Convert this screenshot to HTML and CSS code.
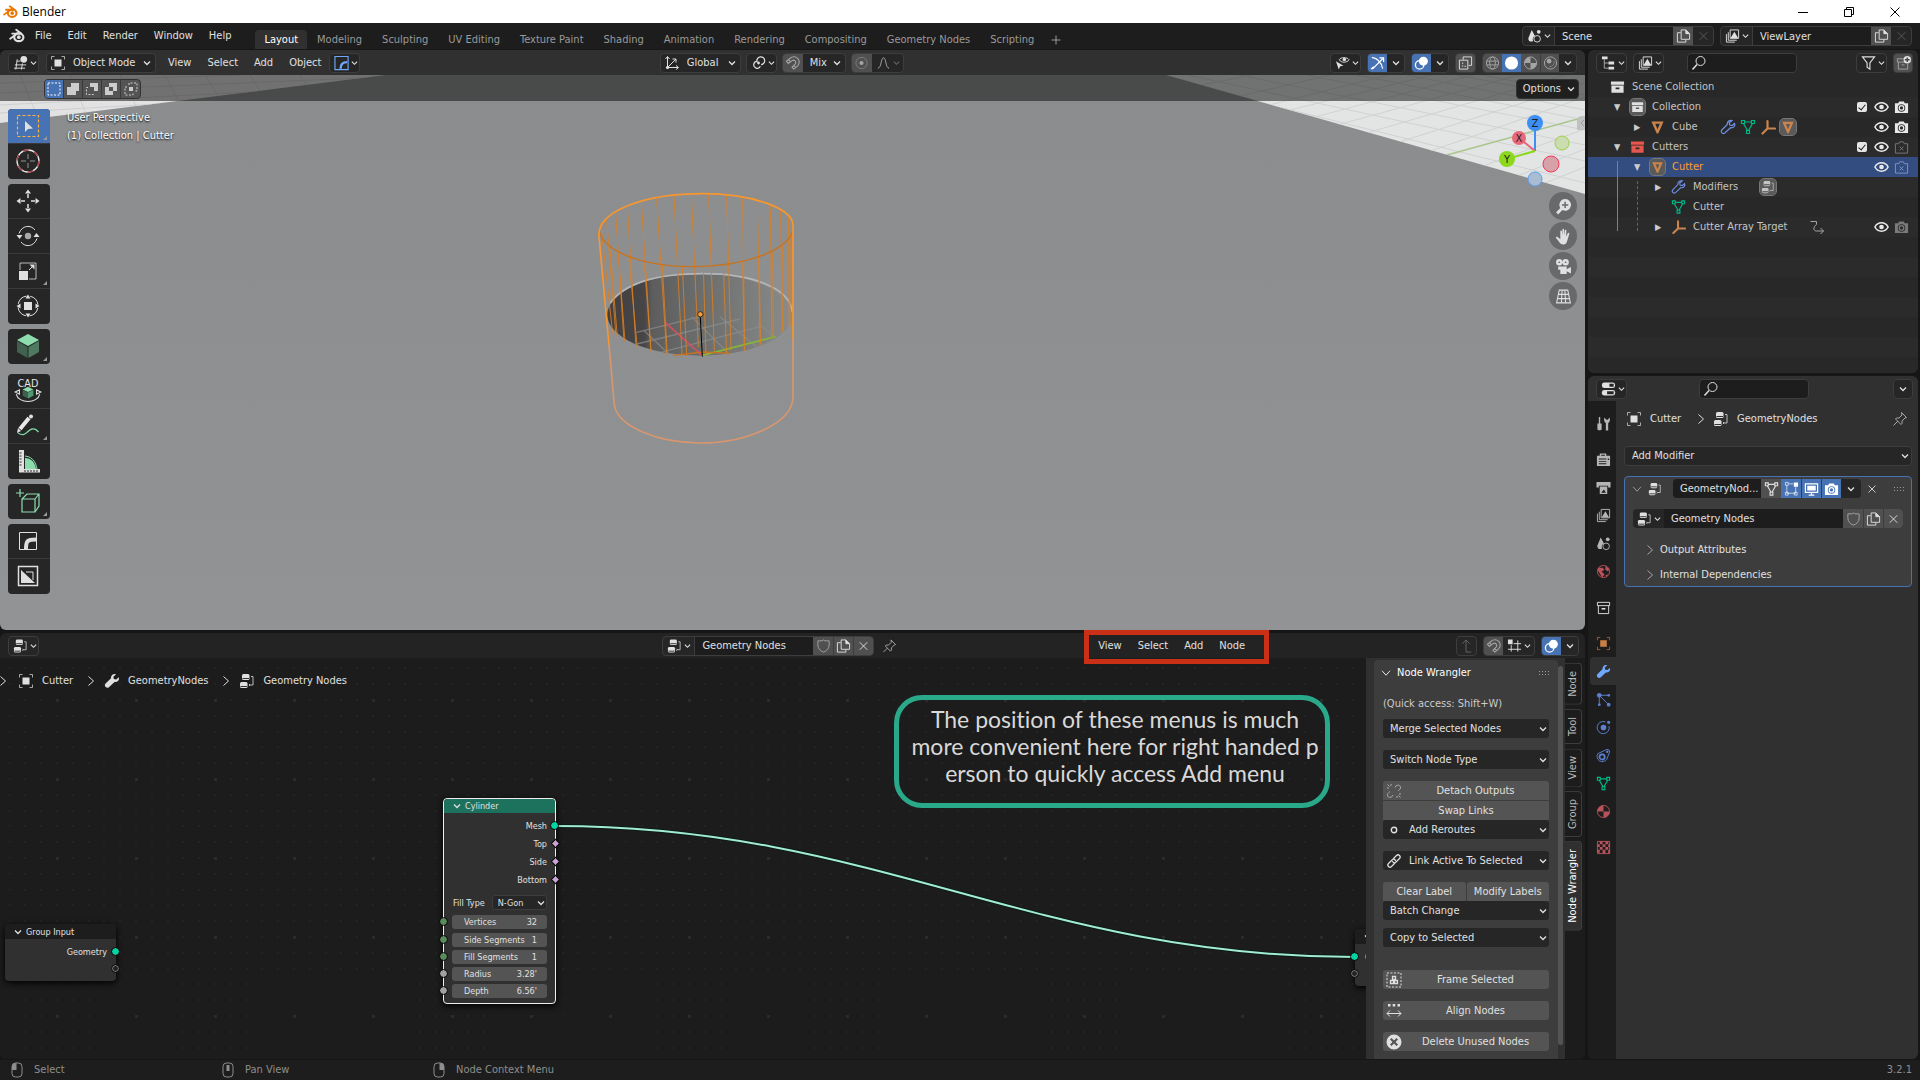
FILE: index.html
```html
<!DOCTYPE html>
<html lang="en">
<head>
<meta charset="utf-8">
<title>Blender</title>
<link rel="stylesheet" href="styles.css">
</head>
<body>
<svg class="defs" aria-hidden="true">
  <symbol id="chev" viewBox="0 0 8 8"><path class="s" d="M1 2.500l3 3 3-3" stroke-width="1.300"/></symbol>
  <symbol id="right" viewBox="0 0 16 16"><path class="s" d="M5.500 3.500l5 4.500-5 4.500"/></symbol>
  <symbol id="open" viewBox="0 0 16 16"><path class="s" d="M3.500 5.500l4.500 5 4.500-5"/></symbol>
  <symbol id="close" viewBox="0 0 16 16"><path class="s" d="M4 4l8 8M12 4l-8 8"/></symbol>
  <symbol id="plus" viewBox="0 0 16 16"><path class="s" d="M8 3.500v9M3.500 8h9"/></symbol>
  <symbol id="logo" viewBox="0 0 16 16"><path class="s" d="M1.200 10.800L8.600 5.200M3.200 5.600h7M7.200 1.800l5 3.700" stroke-width="1.900" stroke-linecap="round"/><ellipse class="s" cx="9.800" cy="9.300" rx="4.600" ry="3.900" stroke-width="2.200"/><circle class="eye" cx="9.800" cy="9.200" r="1.900"/></symbol>
  <symbol id="view3d" viewBox="0 0 16 16"><path class="s" d="M4 6h4M2 10h12M4.500 4L3 15M10 8.500L9 15M1 13.500h12" /><circle class="f" cx="11.500" cy="4" r="3.600"/></symbol>
  <symbol id="object" viewBox="0 0 16 16"><path class="f" d="M4.500 4.500h7v7h-7z"/><path class="s" d="M1.500 4.500v-3h3M11.500 1.500h3v3M14.500 11.500v3h-3M4.500 14.500h-3v-3" opacity=".7"/></symbol>
  <symbol id="bevelblue" viewBox="0 0 16 16"><path d="M1 1h14v14H1z" fill="none" stroke="#71a8ff" stroke-width="1.200"/><path d="M7 14c0-5 2-7 7-7" fill="none" stroke="#71a8ff" stroke-width="2.500"/></symbol>
  <symbol id="axes" viewBox="0 0 16 16"><path class="s" d="M3.500 2v10.500H14M4 12l8-8M1.500 4l2-2.500 2 2.500M12 10.500l2.500 2-2.500 2M8.500 4H12v3.500"/><circle class="f" cx="3.500" cy="12.500" r="1.600"/></symbol>
  <symbol id="pivot" viewBox="0 0 16 16"><path class="s" d="M7 6.200a3.700 3.700 0 1 0 3 5.200M6.300 6.500a4.200 4.200 0 1 1 4.500 3.300" stroke-width="1.300"/><circle class="f" cx="8" cy="8" r="1.500"/></symbol>
  <symbol id="magnet" viewBox="0 0 16 16"><path class="s" d="M1.500 6L5.500 3a5.600 5.600 0 0 1 8 8L9.500 14.500 7.500 12.500 11 9a2.500 2.500 0 0 0-3.500-3.500L3.500 8.500zM3.800 4.300l2 2.500M9.300 10.700l2.200 2.200" stroke-width="1.200"/></symbol>
  <symbol id="prop" viewBox="0 0 16 16"><circle class="s" cx="8" cy="8" r="6" opacity=".5"/><circle class="f" cx="8" cy="8" r="2.200"/></symbol>
  <symbol id="curve" viewBox="0 0 16 16"><path class="s" d="M2 13.500c4 0 3-11 6-11s2 11 6 11"/></symbol>
  <symbol id="visible" viewBox="0 0 16 16"><path class="f" d="M1 6l3 9 1.500-3.500L9 11z"/><path class="s" d="M4.500 4.500C6 1.500 13 1.500 15 4.500c-2 3.500-8.500 3.500-10.500 0z"/><circle class="f" cx="10" cy="4.300" r="1.900"/></symbol>
  <symbol id="gizmo" viewBox="0 0 16 16"><path class="s" d="M2 2c6 1 10 5 11.500 12M2.500 14.500l11-11M10 2.500h4.500V7M1 14.500l3-2.500" stroke-width="1.300"/></symbol>
  <symbol id="overlay" viewBox="0 0 16 16"><circle class="f" cx="10" cy="6" r="4.800"/><circle class="s" cx="6" cy="10" r="4.500" stroke-width="1.400"/></symbol>
  <symbol id="xray" viewBox="0 0 16 16"><path class="s" d="M5.500 4.500v-3h9v9h-3M1.500 5h9v9.500h-9z"/><path class="s" d="M5 7.500v4h4" stroke-dasharray="1.500 1.500"/></symbol>
  <symbol id="wire" viewBox="0 0 16 16"><circle class="s" cx="8" cy="8" r="6.500"/><ellipse class="s" cx="8" cy="8" rx="3" ry="6.500"/><path class="s" d="M2 6h12M2 10h12"/></symbol>
  <symbol id="solid" viewBox="0 0 16 16"><circle class="f" cx="8" cy="8" r="7"/></symbol>
  <symbol id="mat" viewBox="0 0 16 16"><circle class="s" cx="8" cy="8" r="6.500"/><path class="f" d="M8 1.500v6.500H1.500A6.500 6.500 0 0 1 8 1.500zM8 8h6.500A6.500 6.500 0 0 1 8 14.500z"/></symbol>
  <symbol id="rendered" viewBox="0 0 16 16"><circle class="s" cx="8" cy="8" r="6.500"/><circle class="f" cx="6.500" cy="6" r="2.500"/><path class="s" d="M12 6c.5 3-2 6-5.500 6" opacity=".6"/></symbol>
  <symbol id="scene" viewBox="0 0 16 16"><path class="f" d="M5 1.500l3.500 6.500a4 4 0 0 0-2 5.500C3 15 1 12.500 1.500 10z"/><circle class="f" cx="12.500" cy="3.500" r="2"/><circle class="s" cx="10.800" cy="11" r="3.500"/></symbol>
  <symbol id="copy" viewBox="0 0 16 16"><path class="s" d="M5.500 1.500h5l4 4v6h-9zM10.500 1.500v4h4M5 4.500H1.500v10h9V12" /><path class="f" d="M10.500 1.500l4 4h-4z"/></symbol>
  <symbol id="layers" viewBox="0 0 16 16"><path class="s" d="M5.500 1.500h9v9h-9zM3.500 4v8.500h9M1.500 6v8.500h9"/><path class="f" d="M6 10l4-6.500 4 6.500z"/></symbol>
  <symbol id="tree" viewBox="0 0 16 16"><path class="f" d="M1 1h6v3H1zM8 6.500h6v3H8zM8 12h6v3H8z"/><path class="s" d="M3.500 4v9.500H8M3.500 8H8" opacity=".7"/></symbol>
  <symbol id="search" viewBox="0 0 16 16"><circle class="s" cx="9.500" cy="6" r="4.500"/><path class="s" d="M6 9.500L1.500 14.500" stroke-width="1.500"/></symbol>
  <symbol id="filter" viewBox="0 0 16 16"><path class="s" d="M1.500 1.500h13L9.500 8v6.500l-3-2V8z" stroke-width="1.200"/></symbol>
  <symbol id="newcol" viewBox="0 0 16 16"><path class="s" d="M8 3.500H1.500v3.500h10M2.500 7v7.500h10V9M6 10h3"/><circle cx="12" cy="4.500" r="4" fill="#e0e0e0"/><path d="M12 2v5M9.500 4.500h5" stroke="#444" stroke-width="1.400"/></symbol>
  <symbol id="coll" viewBox="0 0 16 16"><path class="f" d="M1 2h14v3.500H1z"/><path class="f" fill-rule="evenodd" d="M1.500 6.500h13V14h-13zM6 8.500v2h4v-2z"/></symbol>
  <symbol id="collo" viewBox="0 0 16 16"><path class="s" d="M1.500 2.500h13V6h-13zM2.500 6v8.500h11V6"/><path class="f" d="M6 8.500h4v1.700H6z"/></symbol>
  <symbol id="tri" viewBox="0 0 16 16"><path class="f" fill-rule="evenodd" d="M1.500 2h13L8.800 15H7.200zM5.500 4.500L8 10.500l2.500-6z"/></symbol>
  <symbol id="mesh" viewBox="0 0 16 16"><path class="s" d="M4.500 3h7M3.500 4.500l4 7M12.500 4.500l-4 7M1.500 1.500h3v3h-3zM11.500 1.500h3v3h-3zM6.500 11.500h3v3h-3z" stroke-width="1.200"/></symbol>
  <symbol id="wrench" viewBox="0 0 16 16"><path class="f" d="M14.800 4.200l-2.600 2.300-2.400-.5-.4-2.300L12 1.200C9.500.300 6.800 2 7 5.200L1.400 10.800c-1.800 2.200 1.400 5.200 3.500 3.500L10.500 9c3.500.500 5.300-2.500 4.300-4.800z"/></symbol>
  <symbol id="wrencho" viewBox="0 0 16 16"><path class="s" d="M14.500 4.500l-2.500 2-2.300-.500-.500-2.300L12 1.500C9 .800 7 3 7.300 5.500l-5.500 5.500c-1.500 2 1 4.500 3 3L10.500 8.700c3 .5 5-2 4-4.200z" stroke-width="1.200"/></symbol>
  <symbol id="empty" viewBox="0 0 16 16"><path class="s" d="M7.500 2v7.500H15M7.500 9.500l-5 5" stroke-width="2.200" stroke-linecap="round"/></symbol>
  <symbol id="nodes" viewBox="0 0 16 16"><rect class="f" x="3" y="1" width="7.500" height="6" rx="1.500"/><rect class="f" x="1" y="9" width="7.500" height="6" rx="1.500"/><path d="M3.500 5.500h6.500M1.500 13.500h6.500" stroke="#333" stroke-width="1"/><path class="s" d="M12 3.500h2v8.500h-3.500M10 11l1 1-1 1" opacity=".8"/></symbol>
  <symbol id="eye" viewBox="0 0 16 16"><path class="s" d="M1 8c3-6 11-6 14 0-3 6-11 6-14 0z" stroke-width="1.700"/><circle class="f" cx="8" cy="8" r="2.500"/></symbol>
  <symbol id="cam" viewBox="0 0 16 16"><path class="f" fill-rule="evenodd" d="M1 4h3.500L5.500 2h5l1 2H15v10.500H1zM8 5a4 4 0 1 0 0 8 4 4 0 0 0 0-8z"/><circle class="s" cx="8" cy="9" r="2.400" stroke-width="1.400"/></symbol>
  <symbol id="camoff" viewBox="0 0 16 16"><path class="s" d="M1.500 4.500h3.500L6 2.500h4l1 2h3.500v10h-13zM6 7.500l4 4M10 7.500l-4 4"/></symbol>
  <symbol id="hook" viewBox="0 0 16 16"><path class="s" d="M1.500 2.500h6v3c-4 3-3 6.500 0 6.500h7M11.500 9l3 3-3 3"/></symbol>
  <symbol id="props" viewBox="0 0 16 16"><rect class="f" x="1" y="1" width="14" height="6" rx="2.500"/><rect class="f" x="1" y="9" width="14" height="6" rx="2.500"/><path d="M9 2.500h4.500v3H9zM6.500 10.500h7v3h-7z" fill="#262626"/></symbol>
  <symbol id="tool" viewBox="0 0 16 16"><path class="f" d="M3 1h1.500v7H6v6c0 1.500-4.500 1.500-4.500 0V8H3zM9 1.500l2 2.500h1.500l2-2.500c1 3 0 5-1.500 6v8h-2.500v-8C9 6.500 8 4.500 9 1.500z"/></symbol>
  <symbol id="render" viewBox="0 0 16 16"><path class="f" fill-rule="evenodd" d="M1 4h3V1.500h7V4h4v11H1zM5.500 3v1h4V3zM3 7v1h8V7zM3 9.500v1h8v-1zM3 12v1h8v-1zM12.500 7v1.500H14V7z"/></symbol>
  <symbol id="output" viewBox="0 0 16 16"><path class="f" d="M.500 2h15v6H13V6H3v2H.500z"/><path class="f" fill-rule="evenodd" d="M4 7h8v8H4zM5.500 13.500h5L8.500 10z"/></symbol>
  <symbol id="world" viewBox="0 0 16 16"><circle class="s" cx="8" cy="8" r="6.500"/><path class="f" d="M2 4l5 0 2 2-3 2 3 3-2 3.500L5 12 2 7zM10 2l4 3-1 3-3-2zM10 12l3-1-2 3z"/></symbol>
  <symbol id="particles" viewBox="0 0 16 16"><circle class="f" cx="3.500" cy="3.500" r="2.500"/><path class="s" d="M3.500 3.500h9M3.500 3.500v9M3.500 3.500l9 9"/><circle class="f" cx="13.500" cy="3.500" r="1.500"/><circle class="f" cx="3.500" cy="13.500" r="1.500"/><circle class="f" cx="13.500" cy="13.500" r="2"/></symbol>
  <symbol id="physics" viewBox="0 0 16 16"><path class="s" d="M10 2A6.500 6.500 0 1 0 14 6.500"/><circle class="f" cx="8" cy="8" r="3"/><circle class="f" cx="13.500" cy="2.500" r="1.700"/></symbol>
  <symbol id="constraint" viewBox="0 0 16 16"><path class="s" d="M2 6L11.500 1.500a2.500 2.500 0 0 1 3 3L11.500 12A5.500 5.500 0 1 1 2 6z"/><circle class="s" cx="6.500" cy="9.500" r="2.800" stroke-width="1.800"/><circle class="f" cx="12" cy="4" r="1.300"/></symbol>
  <symbol id="checker" viewBox="0 0 16 16"><path class="s" d="M1.500 1.500h13v13h-13z"/><path class="f" d="M4 1.500h3v3H4zM10 1.500h3v3h-3zM1.500 4.500H4v3H1.500zM7 4.500h3v3H7zM13 4.500h2v3h-2zM4 7.500h3v3H4zM10 7.500h3v3h-3zM1.500 10.500H4v3H1.500zM7 10.500h3v4H7zM13 10.500h2v4h-2z"/></symbol>
  <symbol id="pin" viewBox="0 0 16 16"><path class="s" d="M9.500 1.500l5 5-1.500.500-3 3v2.500l-1 1-5.500-5.500 1-1H7l3-3zM6 10l-4.500 4.500"/></symbol>
  <symbol id="editmode" viewBox="0 0 16 16"><path class="s" d="M3 4v8.500h9.500V6M5 2.500h5M1.500 1h3v3h-3zM1.500 11.500h3v3h-3zM11 11.500h3v3h-3z" opacity=".7"/><path class="f" d="M10.500 1H15v4.500h-4.500z"/></symbol>
  <symbol id="screen" viewBox="0 0 16 16"><path class="s" d="M1.500 2.500h13v9h-13zM8 12v2.500M5 14.500h6" stroke-width="1.300"/><path class="f" d="M3.500 4.500h9v5h-9z"/></symbol>
  <symbol id="shield" viewBox="0 0 16 16"><path class="s" d="M8 1.500l1.500 1h4.500V7c0 4-3 6.500-6 7.500-3-1-6-3.500-6-7.500V2.500h4.500z"/></symbol>
  <symbol id="grip" viewBox="0 0 12 6"><path d="M0 1.500h12M0 4.500h12" stroke="#999" stroke-dasharray="1 2"/></symbol>
  <symbol id="up" viewBox="0 0 16 16"><path class="s" d="M13 14.500H7.500v-13M3.500 5.500l4-4 4 4"/></symbol>
  <symbol id="snapgrid" viewBox="0 0 16 16"><path class="f" d="M1 1h5v5H1z"/><path class="s" d="M11.500 2v12M4.500 7v7M7 5.500h8M1 11.500h14"/></symbol>
  <symbol id="unlink" viewBox="0 0 16 16"><path class="s" d="M9 4.500c1-3.500 6-3 5.500.500-.3 1.500-1.500 2-2.500 3M7 12c-1 3.500-6 3-5.500-.500.300-1.500 1.500-2 2.500-3M1.500 1.500l2 2M5 1v2M1 5h2M14.500 14.500l-2-2M11 15v-2M15 11h-2"/></symbol>
  <symbol id="dotc" viewBox="0 0 16 16"><circle class="s" cx="8" cy="8" r="2.700" stroke-width="1.400"/></symbol>
  <symbol id="link" viewBox="0 0 16 16"><path class="s" d="M7 6l3.500-3.500c2-2 5 1 3 3L10 9c-1.500 1.500-3.500.500-3.500-1M9 10l-3.500 3.500c-2 2-5-1-3-3L6 7c1.500-1.500 3.500-.500 3.500 1" stroke-width="1.200"/></symbol>
  <symbol id="frame" viewBox="0 0 16 16"><path class="s" d="M1 1h14v14H1z" stroke-dasharray="2 1.500"/><path class="s" d="M6.500 4.500h3v3h-3zM4.500 8.500h3v3h-3zM8.500 8.500h3v3h-3z" stroke-width="1.300"/></symbol>
  <symbol id="align" viewBox="0 0 16 16"><path class="f" d="M2 1h2.500v2.500H2zM6.700 1h2.500v2.500H6.700zM11.500 1H14v2.500h-2.500z"/><path class="s" d="M1 10.500h14M4 7.500l-3 3 3 3M12 7.500l3 3-3 3"/></symbol>
  <symbol id="cancel" viewBox="0 0 16 16"><path class="f" fill-rule="evenodd" d="M8 .5a7.500 7.500 0 1 0 0 15 7.500 7.500 0 0 0 0-15zM5.500 4L8 6.500 10.500 4 12 5.500 9.500 8l2.500 2.500-1.500 1.500L8 9.500 5.500 12 4 10.500 6.500 8 4 5.500z"/></symbol>
  <symbol id="mouse" viewBox="0 0 16 16"><rect class="s" x="3" y="1" width="10" height="14" rx="3.500"/></symbol>
  <symbol id="zoomin" viewBox="0 0 16 16"><path class="f" fill-rule="evenodd" d="M9.500 1a5.500 5.500 0 1 1-2.600 10.300L3 15.500 1 13.500l4-4A5.500 5.500 0 0 1 9.500 1zM8.800 3.500v2.300H6.500v1.400h2.300v2.300h1.400V7.200h2.300V5.800h-2.300V3.500z"/></symbol>
</svg>

<header class="titlebar">
  <svg class="i orange"><use href="#logo"/></svg><span>Blender</span>
  <div class="winbtns">
    <button aria-label="Minimize"><svg viewBox="0 0 12 12"><path class="s" d="M1 6.500h10"/></svg></button>
    <button aria-label="Restore"><svg viewBox="0 0 12 12"><path class="s" d="M1.500 3.500h7v7h-7zM3.500 3.500v-2h7v7h-2"/></svg></button>
    <button aria-label="Close"><svg viewBox="0 0 12 12"><path class="s" d="M1.500 1.500l9 9M10.500 1.500l-9 9"/></svg></button>
  </div>
</header>

<div class="topbar">
  <nav class="menus">
    <button aria-label="Blender menu"><svg class="i"><use href="#logo"/></svg></button>
    <button>File</button><button>Edit</button><button>Render</button><button>Window</button><button>Help</button>
  </nav>
  <nav class="tabs">
    <button class="on">Layout</button><button>Modeling</button><button>Sculpting</button><button>UV Editing</button><button>Texture Paint</button><button>Shading</button><button>Animation</button><button>Rendering</button><button>Compositing</button><button>Geometry Nodes</button><button>Scripting</button><button aria-label="Add workspace"><svg class="i"><use href="#plus"/></svg></button>
  </nav>
  <div class="idblocks">
    <div class="group idblock"><button class="icb"><svg class="i"><use href="#scene"/></svg><svg class="c"><use href="#chev"/></svg></button><input aria-label="Scene" value="Scene"><button class="sq lit"><svg class="i"><use href="#copy"/></svg></button><button class="sq dim"><svg class="i"><use href="#close"/></svg></button></div>
    <div class="group idblock"><button class="icb"><svg class="i"><use href="#layers"/></svg><svg class="c"><use href="#chev"/></svg></button><input aria-label="View layer" value="ViewLayer"><button class="sq lit"><svg class="i"><use href="#copy"/></svg></button><button class="sq dim"><svg class="i"><use href="#close"/></svg></button></div>
  </div>
</div>

<main class="workspace">
  <div class="left">
    <section class="viewport">
      <div class="ehead">
        <button class="icb group"><svg class="i"><use href="#view3d"/></svg><svg class="c"><use href="#chev"/></svg></button>
        <div class="group dd mode"><svg class="i"><use href="#object"/></svg><select aria-label="Mode"><option>Object Mode</option></select><svg class="c"><use href="#chev"/></svg></div>
        <nav class="menus"><button>View</button><button>Select</button><button>Add</button><button>Object</button></nav>
        <button class="icb group"><svg class="i"><use href="#bevelblue"/></svg><svg class="c"><use href="#chev"/></svg></button>
        <span class="space-a"></span>
        <div class="group dd orient"><svg class="i"><use href="#axes"/></svg><select aria-label="Orientation"><option>Global</option></select><svg class="c"><use href="#chev"/></svg></div>
        <button class="icb group"><svg class="i"><use href="#pivot"/></svg><svg class="c"><use href="#chev"/></svg></button>
        <div class="group dd snap"><button class="sq lit soft"><svg class="i"><use href="#magnet"/></svg></button><select aria-label="Snap"><option>Mix</option></select><svg class="c"><use href="#chev"/></svg></div>
        <div class="group soft"><button class="sq lit"><svg class="i"><use href="#prop"/></svg></button><button class="icb"><svg class="i"><use href="#curve"/></svg><svg class="c faint"><use href="#chev"/></svg></button></div>
        <span class="space-b"></span>
        <div class="shading">
          <button class="icb group"><svg class="i"><use href="#visible"/></svg><svg class="c"><use href="#chev"/></svg></button>
          <div class="group"><button class="sq blue"><svg class="i"><use href="#gizmo"/></svg></button><button class="sq more"><svg class="c"><use href="#chev"/></svg></button></div>
          <div class="group"><button class="sq blue"><svg class="i"><use href="#overlay"/></svg></button><button class="sq more"><svg class="c"><use href="#chev"/></svg></button></div>
          <div class="group"><button class="sq lit"><svg class="i"><use href="#xray"/></svg></button></div>
          <div class="group"><button class="sq lit soft"><svg class="i"><use href="#wire"/></svg></button><button class="sq blue"><svg class="i"><use href="#solid"/></svg></button><button class="sq lit soft"><svg class="i"><use href="#mat"/></svg></button><button class="sq lit soft"><svg class="i"><use href="#rendered"/></svg></button><button class="sq more"><svg class="c"><use href="#chev"/></svg></button></div>
        </div>
      </div>
      <div class="scene">
        <svg class="canvas" viewBox="0 0 1585 555" preserveAspectRatio="xMidYMid slice">
          <defs>
            <clipPath id="floorL"><path d="M0 0h386L0 48z"/></clipPath>
            <clipPath id="floorR"><path d="M1166 0h419v119z"/></clipPath>
            <linearGradient id="bg" x1="0" y1="0" x2="0" y2="1"><stop offset="0" stop-color="#8b8c8d"/><stop offset="1" stop-color="#919395"/></linearGradient>
            <linearGradient id="hole"><stop offset="0" stop-color="#413f40"/><stop offset=".2" stop-color="#474546"/><stop offset=".24" stop-color="#5d5d5d"/><stop offset=".6" stop-color="#717373"/><stop offset="1" stop-color="#8a8c8c"/></linearGradient>
            <clipPath id="holeClip"><ellipse cx="420" cy="434" rx="278" ry="123"/></clipPath>
          </defs>
          <path d="M0 0h1585v555H0z" fill="url(#bg)"/>
          <g clip-path="url(#floorL)"><path d="M0 0h386v48H0z" fill="#e2e2e3"/><path d="M20 0l20 48M70 0l20 48M120 0l25 48M165 0l25 48M205 0l30 48M250 0l30 48M300 0l30 48M0 38l386-22M0 30l386-20M0 18l386-16M0 8l240-8" stroke="#cfcfd2" fill="none"/></g>
          <g clip-path="url(#floorR)"><path d="M1166 0h419v119h-419z" fill="#e3e4e4"/><path d="M1160 18l360-70M1160 40l425-100M1230 40l355-90M1270 40l315-78M1300 46l285-76M1330 52l255-70M1360 60l225-66M1390 70l195-62M1425 78l160-56M1480 92l105-38M1510 104l75-30M1540 110l45-18M1140 -20l445 90M1180 -25l405 80M1230 -25l355 70M1280 -25l305 60M1330 -25l255 50M1380 -20l205 40M1160 -6l425 92M1150 0l435 108" stroke="#d0d2d2" fill="none"/><path d="M1447 80l138-38" stroke="#a9c58a" stroke-width="1.500"/></g>
          <path d="M1577 55v-9q0-5 5-5h3v14z" fill="#c0c1c1"/><path d="M1584 45l-3 3 3 3" fill="none" stroke="#999"/>
          <g transform="translate(560 95) scale(.3333)" fill="none">
            <ellipse cx="420" cy="434" rx="278" ry="123" fill="url(#hole)"/>
            <path d="M150 400C200 330 310 311 430 311c140 0 260 40 267 115" stroke="#b4b6b7" stroke-width="5"/>
            <g clip-path="url(#holeClip)" stroke="#8c8e8e" stroke-width="4" opacity=".7"><path d="M230 487l190-47M230 522l310-75M300 548l300-78M250 480l80 75M395 440l110 110M480 440l110 90M595 460l50 42"/></g>
            <path d="M316 458l108 97" stroke="#d4505f" stroke-width="5"/><path d="M424 557l222-57" stroke="#84b637" stroke-width="5"/>
            <g stroke="#dd7f22" stroke-width="3"><path opacity=".85" d="M122 160l36 330M140 150l28 350M167 128l25 388M202 110l26 420M244 96l29 447M290 86l30 464M342 77l24 475M394 72l21 460M446 72l17 470M500 77l13 465M548 82l6 455M592 95l9 430M631 108l5 395M662 122l5 360M685 140l3 330M150 235l22 265M175 250l20 265M207 265l25 270M253 278l20 267M307 286l15 270M367 290l13 268M430 290l8 268M490 285l10 268M548 272l5 271M598 260l3 265M638 242l2 263M668 225l1 263M690 200v270"/><path stroke-width="4" stroke="#c9731f" d="M117 180C130 250 260 290 400 290c150 0 280-45 300-110M340 556l90-10 80 4"/></g>
            <path d="M147 525l16 180c10 65 130 114 257 114 140 0 280-60 279-139V505" stroke="#d8966f" stroke-width="5"/>
            <path d="M147 525L117 200C110 120 260 71 430 71c150 0 265 45 269 92v344" stroke="#f8962f" stroke-width="5"/>
            <path d="M421 440l6 120" stroke="#000" stroke-width="3"/><circle cx="421" cy="433" r="8" fill="#ff9a2e" stroke="#30302a" stroke-width="3"/>
          </g>
          <g fill="none" stroke-width="2"><path d="M1535 76V48" stroke="#3b8ff5"/><path d="M1535 76l-16-13" stroke="#e9647a"/><path d="M1535 76l-28 8" stroke="#8bd81c"/>
            <g stroke-width="1"><circle cx="1562" cy="68" r="7" fill="#cbdcae" stroke="#9ccf4b"/><circle cx="1551" cy="89" r="8" fill="#d6a1a8" stroke="#f5395b"/><circle cx="1535" cy="104" r="7" fill="#a9bcd2" stroke="#5a9df0"/></g></g>
          <circle cx="1535" cy="48" r="8" fill="#3b8ff5"/><circle cx="1519" cy="63" r="7" fill="#e7677b"/><circle cx="1507" cy="84" r="8" fill="#8bd81c"/>
          <g class="axis" text-anchor="middle"><text x="1535" y="52">Z</text><text x="1519" y="67">X</text><text x="1507" y="88">Y</text></g>
        </svg>
        <div class="toolhead">
          <div class="group modes">
            <button class="blue"><svg viewBox="0 0 14 14"><path class="s" d="M1 1h12v12H1z" stroke-dasharray="2 1.500"/></svg></button>
            <button><svg viewBox="0 0 14 14"><path class="f" d="M5 1h8v8h-3v4H1V5h4z"/></svg></button>
            <button><svg viewBox="0 0 14 14"><path class="f" d="M5 1h8v8H9V5H5z"/><path class="s" d="M3 5.500H1.500v7h7V11" stroke-dasharray="2 1.500"/></svg></button>
            <button><svg viewBox="0 0 14 14"><path class="f" fill-rule="evenodd" d="M5 1h8v8H9v4H1V5h4zM5 5v4h4V5z"/></svg></button>
            <button><svg viewBox="0 0 14 14"><path class="f" d="M5 5h4v4H5z"/><path class="s" d="M5 3V1h8v8h-2M3 5H1v8h8v-2" stroke-dasharray="2 1.500"/></svg></button>
          </div>
          <button class="options">Options<svg class="c"><use href="#chev"/></svg></button>
        </div>
        <div class="stage">
          <div class="toolbar">
            <div class="tg">
              <button class="sel corner"><svg viewBox="0 0 24 24"><path d="M1.500 1.500h21v21h-21z" fill="none" stroke="#ffb13b" stroke-width="1.200" stroke-dasharray="3 2"/><path class="f" d="M9 7v11l3-3 5-.5z"/></svg></button>
              <button><svg viewBox="0 0 24 24"><circle cx="12" cy="12" r="11" fill="none" stroke="#e8e8e8" stroke-width="1.300"/><circle cx="12" cy="12" r="11" fill="none" stroke="#a83c40" stroke-width="1.400" stroke-dasharray="5.800 5.800"/><path class="s" d="M12 5v5M12 14v5M5 12h5M14 12h5" opacity=".6"/></svg></button>
            </div>
            <div class="tg">
              <button><svg viewBox="0 0 24 24"><path class="f" d="M12 .5l3 4H9zM12 23.500l3-4H9zM.5 12l4-3v6zM23.500 12l-4-3v6z"/><path class="s" d="M12 5v4M12 15v4M5 12h4M15 12h4" stroke-width="1.500"/></svg></button>
              <button><svg viewBox="0 0 24 24"><path class="s" d="M3 9.500C6 1 15 .500 19 6M21 14.500C18 23 9 23.500 5 18"/><path class="f" d="M.500 11h6L3.500 15zM17.500 13h6l-3-4z"/><circle class="f" cx="12" cy="12" r="3.200" opacity=".7"/></svg></button>
              <button class="corner"><svg viewBox="0 0 24 24"><path class="s" d="M4 11V4h16v16h-7" opacity=".8"/><path class="f" d="M3 12h9v9H3zM18.500 5.500v5l-5-5z"/><path class="s" d="M13 11l4-4"/></svg></button>
              <button><svg viewBox="0 0 24 24"><circle class="s" cx="12" cy="12" r="10" stroke-dasharray="12 3.700" stroke-dashoffset="-2"/><path class="f" d="M8 8h8v8H8zM12 .5l2.500 4h-5zM12 23.500l2.500-4h-5zM.500 12l4-2.500v5zM23.500 12l-4-2.500v5z"/></svg></button>
            </div>
            <div class="tg"><button class="corner"><svg viewBox="0 0 24 24"><path d="M12 0l11 6-11 6L1 6z" fill="#8ddcae"/><path d="M1 7l10.500 6v11L1 18z" fill="#3f614e"/><path d="M23 7l-10.500 6v11L23 18z" fill="#4f7a62"/></svg></button></div>
            <div class="tg gap">
              <button><svg class="cad" viewBox="0 0 26 28"><text x="13" y="10" text-anchor="middle">CAD</text><path class="s" d="M2 17c2 9 20 9 22 0M1 15l4-2v4zM25 15l-4-2v4z"/><path d="M13 10l5 2.500-5 2.500-5-2.500z" fill="#8ddcae"/><path d="M8 13l5 2.500V21l-5-2.500z" fill="#3f614e"/><path d="M18 13l-5 2.500V21l5-2.500z" fill="#4f9a70"/></svg></button>
              <button class="corner"><svg viewBox="0 0 24 24"><path d="M2 19c8 5 9-3 14-4 3-.5 5 1 6.500 3" fill="none" stroke="#7fd6a4" stroke-width="1.300"/><path d="M4 15L13 4" stroke="#e8e8e8" stroke-width="4"/><path class="f" d="M1 19l1-5 3 3z"/><circle class="f" cx="15" cy="2.500" r="2"/></svg></button>
              <button><svg viewBox="0 0 24 24"><path d="M9 9c7 0 10 5 11 11H9z" fill="#8ddcae"/><path d="M9 7c9 1 11 8 12 13" fill="none" stroke="#8ddcae"/><path class="f" d="M3 1h5v19h16v3.500H3z"/><path d="M3.500 4h2M3.500 7h2M3.500 10h2M3.500 13h2M3.500 16h2M9 23v-2M12 23v-2M15 23v-2M18 23v-2M21 23v-2" stroke="#262626"/></svg></button>
            </div>
            <div class="tg"><button class="corner"><svg viewBox="0 0 24 24"><path d="M6 10h13v13H6zM6 10l5-5h12v12l-4 6M19 10l4-5M4 0v8M0 4h8" fill="none" stroke="#8ddcae" stroke-width="1.200"/></svg></button></div>
            <div class="tg">
              <button><svg viewBox="0 0 24 24"><path class="s" d="M3.500 3.500h17v17h-17z"/><path d="M10 20c0-8 1-9.500 10-9.500" fill="none" stroke="#ddd" stroke-width="4"/></svg></button>
              <button><svg viewBox="0 0 24 24"><path class="s" d="M2.500 2.500h19v19h-19z" stroke-width="1.500"/><path class="f" d="M5 6l14 13H5z"/><path class="s" d="M10 8h7v8"/></svg></button>
            </div>
          </div>
          <p class="vinfo">User Perspective<br>(1) Collection | Cutter</p>
          <div class="navbtns">
            <button aria-label="Zoom"><svg class="i"><use href="#zoomin"/></svg></button>
            <button aria-label="Move view"><svg viewBox="0 0 16 16"><path class="f" d="M5 9V3c0-1 1.500-1 1.500 0l.5 4V1.500c0-1 1.500-1 1.500 0V7l.7-4.800c.2-1 1.600-.7 1.500.2L10.500 8l1.500-3c.6-1 1.800-.4 1.500.5L11.500 12c-.5 2-1.500 3.500-3.500 3.500-2.500 0-3.500-1.500-4.500-3L1 9.500c-.6-.9.5-1.800 1.400-1l2.600 2z"/></svg></button>
            <button aria-label="Camera view"><svg viewBox="0 0 16 16"><path class="f" fill-rule="evenodd" d="M4 1a3 3 0 1 0 0 6 3 3 0 0 0 0-6zM4 3.200a.8.800 0 1 1 0 1.600.8.800 0 0 1 0-1.600zM10 1a3 3 0 1 0 0 6 3 3 0 0 0 0-6zM10 3.200a.8.800 0 1 1 0 1.600.8.800 0 0 1 0-1.600z"/><path class="f" d="M3 8h8v2.500l4-2v6l-4-2V15H5v-4H3z"/></svg></button>
            <button aria-label="Perspective"><svg viewBox="0 0 16 16"><path class="s" d="M4 2h8l2.500 12h-13zM3.200 6h9.600M2.500 10h11M6.700 2L6 14M9.300 2l.7 12"/></svg></button>
          </div>
        </div>
      </div>
    </section>

    <section class="nodeeditor">
      <div class="ehead">
        <button class="icb group"><svg class="i"><use href="#nodes"/></svg><svg class="c"><use href="#chev"/></svg></button>
        <span class="space-c"></span>
        <div class="group idblock"><button class="icb"><svg class="i"><use href="#nodes"/></svg><svg class="c"><use href="#chev"/></svg></button><input aria-label="Node tree" value="Geometry Nodes"><button class="sq lit soft"><svg class="i"><use href="#shield"/></svg></button><button class="sq lit"><svg class="i"><use href="#copy"/></svg></button><button class="sq lit"><svg class="i"><use href="#close"/></svg></button></div>
        <button class="pinb soft"><svg class="i"><use href="#pin"/></svg></button>
        <span class="space-d"></span>
        <nav class="menus marked"><button>View</button><button>Select</button><button>Add</button><button>Node</button></nav>
        <span class="space-e"></span>
        <div class="shading">
          <div class="group"><button class="sq faint"><svg class="i"><use href="#up"/></svg></button></div>
          <div class="group"><button class="sq lit soft"><svg class="i"><use href="#magnet"/></svg></button><button class="icb"><svg class="i"><use href="#snapgrid"/></svg><svg class="c"><use href="#chev"/></svg></button></div>
          <div class="group"><button class="sq blue"><svg class="i"><use href="#overlay"/></svg></button><button class="sq more"><svg class="c"><use href="#chev"/></svg></button></div>
        </div>
      </div>
      <div class="nbody">
        <div class="graph">
          <svg class="wires">
            <defs><pattern id="dots" x="56" y="41" width="79" height="79" patternUnits="userSpaceOnUse"><path d="M16 0h2v2h-2zM32 0h2v2h-2zM47 0h2v2h-2zM63 0h2v2h-2zM0 16h2v2H0zM16 16h2v2h-2zM32 16h2v2h-2zM47 16h2v2h-2zM63 16h2v2h-2zM0 32h2v2H0zM16 32h2v2h-2zM32 32h2v2h-2zM47 32h2v2h-2zM63 32h2v2h-2zM0 47h2v2H0zM16 47h2v2h-2zM32 47h2v2h-2zM47 47h2v2h-2zM63 47h2v2h-2zM0 63h2v2H0zM16 63h2v2h-2zM32 63h2v2h-2zM47 63h2v2h-2zM63 63h2v2h-2z" fill="#232323"/><path d="M0 0h3v3H0z" fill="#2b2b2b"/></pattern></defs>
            <rect width="100%" height="100%" fill="url(#dots)"/>
            <path d="M556 168C876 168 1035 299 1355 299" fill="none" stroke="#0c1a16" stroke-width="4"/>
            <path d="M556 168C876 168 1035 299 1355 299" fill="none" stroke="#a2ecd1" stroke-width="2"/>
          </svg>
          <div class="crumbs"><svg class="i"><use href="#right"/></svg><svg class="i"><use href="#object"/></svg><span>Cutter</span><svg class="i"><use href="#right"/></svg><svg class="i"><use href="#wrench"/></svg><span>GeometryNodes</span><svg class="i"><use href="#right"/></svg><svg class="i"><use href="#nodes"/></svg><span>Geometry Nodes</span></div>
          <article class="node gin"><h3><svg class="c"><use href="#chev"/></svg>Group Input</h3><p>Geometry<i class="sock r geo"></i></p><p><i class="sock r none"></i></p></article>
          <article class="node cyl">
            <h3><svg class="c"><use href="#chev"/></svg>Cylinder</h3>
            <p>Mesh<i class="sock r geo"></i></p><p>Top<i class="sock r dia"></i></p><p>Side<i class="sock r dia"></i></p><p>Bottom<i class="sock r dia"></i></p>
            <div class="fill"><label for="ft">Fill Type</label><div class="group dd"><select id="ft"><option>N-Gon</option></select><svg class="c"><use href="#chev"/></svg></div></div>
            <div class="num"><i class="sock l int"></i><label for="n1">Vertices</label><input id="n1" value="32"></div>
            <div class="num"><i class="sock l int"></i><label for="n2">Side Segments</label><input id="n2" value="1"></div>
            <div class="num"><i class="sock l int"></i><label for="n3">Fill Segments</label><input id="n3" value="1"></div>
            <div class="num"><i class="sock l flt"></i><label for="n4">Radius</label><input id="n4" value="3.28'"></div>
            <div class="num"><i class="sock l flt"></i><label for="n5">Depth</label><input id="n5" value="6.56'"></div>
          </article>
          <article class="node gout"><h3><svg class="c"><use href="#chev"/></svg></h3><p>G<i class="sock l geo"></i></p><p><i class="sock l none"></i></p></article>
          <aside class="callout">The position of these menus is much<br>more convenient here for right handed p<br>erson to quickly access Add menu</aside>
        </div>
        <aside class="side">
          <div class="npanel">
            <h2><svg class="i"><use href="#open"/></svg>Node Wrangler<svg class="grip"><use href="#grip"/></svg></h2>
            <p>(Quick access: Shift+W)</p>
            <div class="dd wide"><select aria-label="Merge"><option>Merge Selected Nodes</option></select><svg class="c"><use href="#chev"/></svg></div>
            <div class="dd wide"><select aria-label="Switch"><option>Switch Node Type</option></select><svg class="c"><use href="#chev"/></svg></div>
            <div class="stack">
              <button class="act soft-i"><svg class="i"><use href="#unlink"/></svg><span>Detach Outputs</span></button>
              <button class="act lined"><span>Swap Links</span></button>
              <div class="dd wide"><svg class="i"><use href="#dotc"/></svg><select aria-label="Reroutes"><option>Add Reroutes</option></select><svg class="c"><use href="#chev"/></svg></div>
            </div>
            <div class="dd wide"><svg class="i"><use href="#link"/></svg><select aria-label="Link"><option>Link Active To Selected</option></select><svg class="c"><use href="#chev"/></svg></div>
            <div class="stack">
              <div class="pair"><button class="act"><span>Clear Label</span></button><button class="act"><span>Modify Labels</span></button></div>
              <div class="dd wide"><select aria-label="Batch"><option>Batch Change</option></select><svg class="c"><use href="#chev"/></svg></div>
            </div>
            <div class="dd wide near"><select aria-label="Copy"><option>Copy to Selected</option></select><svg class="c"><use href="#chev"/></svg></div>
            <button class="act far"><svg class="i"><use href="#frame"/></svg><span>Frame Selected</span></button>
            <button class="act"><svg class="i"><use href="#align"/></svg><span>Align Nodes</span></button>
            <button class="act"><svg class="i"><use href="#cancel"/></svg><span>Delete Unused Nodes</span></button>
          </div>
          <div class="sbar"></div>
        </aside>
        <nav class="vtabs"><button>Node</button><button>Tool</button><button>View</button><button>Group</button><button class="on">Node Wrangler</button></nav>
      </div>
    </section>
  </div>

  <div class="rightcol">
    <section class="outliner">
      <div class="ehead">
        <button class="icb group"><svg class="i"><use href="#tree"/></svg><svg class="c"><use href="#chev"/></svg></button>
        <button class="icb group"><svg class="i"><use href="#layers"/></svg><svg class="c"><use href="#chev"/></svg></button>
        <span class="grow1"></span>
        <label class="group find"><svg class="i"><use href="#search"/></svg><input type="search" aria-label="Filter outliner"></label>
        <span class="grow4"></span>
        <button class="icb group"><svg class="i"><use href="#filter"/></svg><svg class="c"><use href="#chev"/></svg></button>
        <button class="group sq lit soft"><svg class="i"><use href="#newcol"/></svg></button>
      </div>
      <ul class="tree">
        <li class="d0"><svg class="i"><use href="#coll"/></svg><span>Scene Collection</span></li>
        <li class="d1"><b>▼</b><svg class="i box"><use href="#coll"/></svg><span>Collection</span><div class="ops"><input type="checkbox" checked aria-label="Enable Collection"><svg class="i"><use href="#eye"/></svg><svg class="i"><use href="#cam"/></svg></div></li>
        <li class="d2"><b>▶</b><svg class="i or"><use href="#tri"/></svg><span>Cube</span><div class="extra"><svg class="i bl"><use href="#wrencho"/></svg><svg class="i gr"><use href="#mesh"/></svg><svg class="i or"><use href="#empty"/></svg><svg class="i or box"><use href="#tri"/></svg></div><div class="ops"><svg class="i"><use href="#eye"/></svg><svg class="i"><use href="#cam"/></svg></div></li>
        <li class="d1"><b>▼</b><svg class="i rd"><use href="#coll"/></svg><span>Cutters</span><div class="ops"><input type="checkbox" checked aria-label="Enable Cutters"><svg class="i"><use href="#eye"/></svg><svg class="i dimi"><use href="#camoff"/></svg></div></li>
        <li class="d2 active"><b>▼</b><svg class="i or box"><use href="#tri"/></svg><span>Cutter</span><div class="ops"><svg class="i"><use href="#eye"/></svg><svg class="i dimi"><use href="#camoff"/></svg></div></li>
        <li class="d3"><b>▶</b><svg class="i bl"><use href="#wrencho"/></svg><span>Modifiers</span><div class="extra"><svg class="i box"><use href="#nodes"/></svg></div></li>
        <li class="d3"><b></b><svg class="i gr"><use href="#mesh"/></svg><span>Cutter</span></li>
        <li class="d3"><b>▶</b><svg class="i or"><use href="#empty"/></svg><span>Cutter Array Target</span><div class="extra"><svg class="i soft"><use href="#hook"/></svg></div><div class="ops"><svg class="i"><use href="#eye"/></svg><svg class="i dimi"><use href="#cam"/></svg></div></li>
      </ul>
    </section>

    <section class="properties">
      <div class="ehead">
        <button class="icb group"><svg class="i"><use href="#props"/></svg><svg class="c"><use href="#chev"/></svg></button>
        <span class="grow6"></span>
        <label class="group find"><svg class="i"><use href="#search"/></svg><input type="search" aria-label="Search properties"></label>
        <span class="grow7"></span>
        <button class="group sq"><svg class="c"><use href="#chev"/></svg></button>
      </div>
      <div class="pbody">
        <nav class="ptabs">
          <button><svg class="i"><use href="#tool"/></svg></button>
          <button class="sep"><svg class="i"><use href="#render"/></svg></button>
          <button><svg class="i"><use href="#output"/></svg></button>
          <button><svg class="i"><use href="#layers"/></svg></button>
          <button><svg class="i"><use href="#scene"/></svg></button>
          <button class="pk"><svg class="i"><use href="#world"/></svg></button>
          <button class="sep wh"><svg class="i"><use href="#collo"/></svg></button>
          <button class="sep or"><svg class="i"><use href="#object"/></svg></button>
          <button class="on"><svg class="i"><use href="#wrench"/></svg></button>
          <button class="bl"><svg class="i"><use href="#particles"/></svg></button>
          <button class="bl"><svg class="i"><use href="#physics"/></svg></button>
          <button class="bl"><svg class="i"><use href="#constraint"/></svg></button>
          <button class="gr"><svg class="i"><use href="#mesh"/></svg></button>
          <button class="pk"><svg class="i"><use href="#mat"/></svg></button>
          <button class="sep pk"><svg class="i"><use href="#checker"/></svg></button>
        </nav>
        <div class="pmain">
          <div class="path"><svg class="i"><use href="#object"/></svg><span>Cutter</span><svg class="i"><use href="#right"/></svg><svg class="i"><use href="#nodes"/></svg><span>GeometryNodes</span><svg class="i soft pinr"><use href="#pin"/></svg></div>
          <div class="group dd addmod"><select aria-label="Add Modifier"><option>Add Modifier</option></select><svg class="c"><use href="#chev"/></svg></div>
          <div class="modifier">
            <div class="mrow">
              <svg class="i soft"><use href="#open"/></svg><svg class="i"><use href="#nodes"/></svg>
              <div class="mname"><input aria-label="Modifier name" value="GeometryNod..."><button class="sq lit"><svg class="i"><use href="#mesh"/></svg></button><button class="sq blue"><svg class="i"><use href="#editmode"/></svg></button><button class="sq blue"><svg class="i"><use href="#screen"/></svg></button><button class="sq blue"><svg class="i"><use href="#cam"/></svg></button><button class="sq dark"><svg class="c"><use href="#chev"/></svg></button></div>
              <svg class="i"><use href="#close"/></svg><svg class="grip"><use href="#grip"/></svg>
            </div>
            <div class="mtree"><button class="icb"><svg class="i"><use href="#nodes"/></svg><svg class="c"><use href="#chev"/></svg></button><input aria-label="Node group" value="Geometry Nodes"><button class="sq lit soft"><svg class="i"><use href="#shield"/></svg></button><button class="sq lit"><svg class="i"><use href="#copy"/></svg></button><button class="sq lit"><svg class="i"><use href="#close"/></svg></button></div>
            <div class="sub"><svg class="i soft"><use href="#right"/></svg>Output Attributes</div>
            <div class="sub"><svg class="i soft"><use href="#right"/></svg>Internal Dependencies</div>
          </div>
        </div>
      </div>
    </section>
  </div>
</main>

<footer class="status">
  <span><svg class="i" viewBox="0 0 16 16"><use href="#mouse"/><path class="f" d="M3 8V4.500Q3 1 7.500 1v7z"/></svg>Select</span>
  <span><svg class="i" viewBox="0 0 16 16"><use href="#mouse"/><path class="f" d="M6.500 3h3v6h-3z"/></svg>Pan View</span>
  <span><svg class="i" viewBox="0 0 16 16"><use href="#mouse"/><path class="f" d="M13 8V4.500Q13 1 8.500 1v7z"/></svg>Node Context Menu</span>
  <em>3.2.1</em>
</footer>
</body>
</html>
```
FILE: styles.css
```css
* { box-sizing: border-box; margin: 0; padding: 0; }
body {
  display: flex; flex-direction: column; height: 100vh; overflow: hidden;
  background: #161616; color: #e0e0e0;
  font: 11px/14px "DejaVu Sans Condensed", "DejaVu Sans", "Noto Sans", sans-serif;
}
button, input, select { font: inherit; color: inherit; background: none; border: 0; outline: 0; border-radius: 0; appearance: none; min-width: 0; }
button { display: flex; align-items: center; justify-content: center; white-space: nowrap; flex: none; }
svg { display: block; flex: none; }
.defs { position: absolute; width: 0; height: 0; }
.s { fill: none; stroke: currentColor; }
.f { fill: currentColor; }
.eye { fill: currentColor; }
.i { width: 16px; height: 16px; }
.c { width: 8px; height: 8px; }

.titlebar { flex: none; height: 23px; display: flex; align-items: center; background: #fff; color: #000; padding-left: 3px; gap: 4px; font: 12px/16px "Open Sans", "Noto Sans", sans-serif; }
.orange { color: #ea7600; }
.orange .eye { fill: #265787; }
.titlebar .i { width: 15px; }
.winbtns { margin-left: auto; display: flex; padding-right: 2px; }
.winbtns button { width: 46px; height: 20px; }
.winbtns svg { width: 12px; height: 12px; }

.topbar { flex: none; height: 27px; display: flex; background: #1d1d1d; border-bottom: 1px solid #161616; padding-right: 8px; }
.menus { display: flex; align-items: center; }
.menus button { padding: 0 8px; height: 20px; }
.topbar .menus { padding: 0 0 0 2px; }
.topbar .menus button:first-child { padding: 0 2px 0 7px; }
.tabs { display: flex; align-items: flex-end; margin-left: 16px; }
.tabs button { height: 19px; padding: 0 10px; color: #9a9a9a; border-radius: 4px 4px 0 0; }
.tabs .on { background: #303030; color: #fff; padding: 0 9px; }
.tabs button:last-child { padding: 0 4px; }
.idblocks { margin-left: auto; display: flex; gap: 6px; padding-top: 3px; }
.group { display: flex; align-items: center; height: 20px; background: #262626; border: 1px solid #3d3d3d; border-radius: 4px; overflow: hidden; }
.group > * { height: 18px; }
.group > .i { height: 16px; }
.group > .c { height: 8px; }
.icb { justify-content: flex-start; padding-left: 4px; gap: 2px; width: 31px; }
.icb .i { width: 15px; }
.icb .c { width: 7px; }
.sq { width: 20px; }
.sq .i, .pinb .i { width: 15px; }
.lit { background: #505050; }
.lit + .lit { border-left: 1px solid #3d3d3d; }
.blue { background: #4772b3; color: #fff; }
.soft > .i, svg.soft, .group.soft .i { color: #a5a5a5; }
.faint { color: #666; }
.dim { color: #5a5a5a; }
.idblock { width: 192px; }
.idblock input { flex: 1; width: 0; background: #1d1d1d; padding: 0 7px; border-left: 1px solid #3d3d3d; }
.nodeeditor .idblock { width: 212px; }

.workspace { flex: 1; min-height: 0; display: grid; grid-template-columns: minmax(0, 1fr) 330px; gap: 3px; padding-right: 2px; }
.left { display: grid; grid-template-rows: 580fr 426fr; gap: 3px; min-height: 0; }
.rightcol { display: grid; grid-template-rows: 323fr 683fr; gap: 3px; min-height: 0; }
section { display: flex; flex-direction: column; min-height: 0; border-radius: 6px; }
.ehead { flex: none; height: 25px; display: flex; align-items: center; padding: 0 8px; background: #303030; border-radius: 6px 6px 0 0; }
.dd select { flex: 1; width: 100%; text-align: left; padding-left: 7px; }
.dd > .c { margin-right: 4px; }
.viewport .dd > .i { margin-left: 3px; }
.mode { width: 110px; margin: 0 4px 0 7px; }
.orient { width: 81px; margin-right: 5px; }
.snap { width: 64px; margin: 0 5px; }
.space-a { flex: 300; }
.space-b { flex: 427; }
.space-c { flex: 624; }
.space-d { flex: 193; }
.space-e { flex: 203; }
.shading { display: flex; gap: 6px; }
.shading .sq { width: 19px; }
.shading .more { width: 17px; }

.scene { position: relative; flex: 1; min-height: 0; display: flex; flex-direction: column; overflow: hidden; border-radius: 0 0 6px 6px; }
.canvas { position: absolute; inset: 0; width: 100%; height: 100%; }
.axis { font-size: 11px; fill: #1d1d1d; }
.toolhead { position: relative; display: flex; align-items: center; justify-content: space-between; height: 26px; padding: 2px 6px 0 44px; background: rgba(20, 20, 20, .55); flex: none; }
.modes { background: #545454; border-color: #333; }
.modes button { width: 19px; color: #ccc; border-right: 1px solid #3a3a3a; }
.modes button:last-child { border: 0; }
.modes .blue { color: #fff; }
.modes svg { width: 14px; height: 14px; }
.options { background: #1f1f1f; border: 1px solid #333; border-radius: 4px; height: 20px; gap: 6px; padding: 0 3px 0 6px; }
.stage { position: relative; display: flex; flex: 1; padding: 8px 8px 0; align-items: flex-start; }
.toolbar { display: flex; flex-direction: column; gap: 5px; }
.tg { border-radius: 4px; overflow: hidden; background: #262626; }
.gap { margin-top: 5px; }
.tg button { position: relative; width: 42px; height: 35px; border-bottom: 1px solid #3a3a3a; }
.tg button:last-child { border-bottom: 0; }
.tg svg { width: 24px; height: 24px; margin: 0 3px 1px 0; }
.tg .cad { width: 28px; height: 30px; }
.cad text { font-size: 10px; fill: #e8e8e8; }
.tg .sel { background: #4772b3; }
.corner::after { content: ""; position: absolute; right: 3px; bottom: 3px; border: 2px solid; border-color: transparent #999 #999 transparent; }
.vinfo { margin-left: 17px; line-height: 18px; text-shadow: 0 1px 2px #000; color: #fff; }
.navbtns { margin: 83px 0 0 auto; display: flex; flex-direction: column; gap: 2px; }
.navbtns button { width: 28px; height: 28px; border-radius: 50%; background: #67696a; }
.navbtns svg { width: 17px; height: 17px; }

.nodeeditor { position: relative; z-index: 1; background: #1c1c1c; }
.nodeeditor .ehead { background: #232323; padding-right: 6px; }
.pinb { margin-left: 8px; }
.marked { position: relative; }
.marked::after { content: ""; position: absolute; inset: -6px -16px -8px -6px; border: 5px solid #c93016; pointer-events: none; }
.nbody { flex: 1; min-height: 0; display: flex; }
.graph { position: relative; flex: 1; overflow: hidden; }
.wires { position: absolute; inset: 0; width: 100%; height: 100%; }
.crumbs { position: relative; display: flex; align-items: center; padding-top: 15px; height: 31px; }
.crumbs svg:first-child { margin: 0 7px 0 -5px; }
.crumbs span { margin: 0 10px 0 8px; }
.crumbs span + svg { margin-right: 5px; }
.node { position: absolute; background: #303030; border-radius: 4px; box-shadow: 0 2px 6px #000; font-size: 9px; line-height: 12px; }
.node h3 { height: 15px; font: inherit; display: flex; align-items: center; gap: 4px; padding-left: 9px; border-radius: 4px 4px 0 0; background: #1d1d1d; }
.node p { position: relative; height: 17px; display: flex; align-items: center; justify-content: flex-end; padding-right: 9px; }
.node h3 + p { margin-top: 4px; }
.gin { left: 5px; top: 266px; width: 111px; height: 57px; }
.gout { left: 1355px; top: 271px; width: 112px; height: 57px; }
.gout p { justify-content: flex-start; padding-left: 10px; }
.cyl { left: 443px; top: 140px; width: 113px; height: 206px; border: 1px solid #eee; }
.cyl h3 { background: #1d725e; height: 14px; }
.cyl p { height: 18px; padding-right: 8px; }
.sock { position: absolute; top: 50%; width: 7px; height: 7px; margin-top: -4px; border-radius: 50%; outline: 1px solid #111; }
.sock.r { right: -3px; }
.sock.l { left: -4px; }
.num .sock.l { left: -12px; }
.dia.sock { background: #cca3d6; border-radius: 0; transform: rotate(45deg); width: 5px; height: 5px; margin-top: -3px; }
.geo { background: #00d6a3; }
.sock.none { border: 1px solid #888; background: #222; }
.int { background: #598c5c; }
.flt { background: #a1a1a1; }
.fill { display: flex; align-items: center; gap: 7px; padding: 0 8px 0 9px; height: 15px; margin: 6px 0 5px; }
.fill .dd { flex: 1; height: 15px; border-radius: 3px; }
.fill select { padding-left: 5px; height: 13px; }
.fill .c { margin-right: 1px; }
.num { position: relative; display: flex; align-items: center; height: 14px; margin: 0 8px 4px; padding: 0 10px 0 12px; background: #545454; border-radius: 3px; }
.num + .num { margin-bottom: 3px; }
.num label { white-space: nowrap; }
.num input { flex: 1; width: 0; text-align: right; }
.callout { position: absolute; left: 894px; top: 37px; width: 436px; height: 113px; border: 5px solid #2aa88a; border-radius: 28px; padding: 6px 0 0 6px; text-align: center; white-space: nowrap; font: 23px/27px Lato, "Open Sans", sans-serif; font-variant-ligatures: none; color: #d8d8d8; }

.side { flex: none; width: 199px; background: #303030; display: flex; padding: 2px 2px 0 8px; overflow: hidden; }
.npanel { flex: 1; background: #3d3d3d; border-radius: 4px 4px 0 0; padding: 0 9px; display: flex; flex-direction: column; gap: 12px; }
.npanel h2 { font: inherit; color: #fff; display: flex; align-items: center; height: 26px; gap: 4px; margin-left: -4px; }
.npanel h2 .i { width: 14px; }
.grip { width: 12px; height: 6px; margin-left: auto; }
.npanel h2 .grip { margin-right: -2px; }
.npanel p { line-height: 18px; margin: -3px 0 -6px; color: #ccc; }
.wide { flex: none; height: 19px; display: flex; align-items: center; background: #262626; border-radius: 3px; }
.wide > .i { margin-left: 3px; }
.wide .c { margin-right: 2px; }
.stack { display: flex; flex-direction: column; }
.act { position: relative; height: 19px; background: #545454; border-radius: 3px; display: flex; }
.act .i { margin-left: 3px; }
.act span { flex: 1; text-align: center; }
.stack .act { border-radius: 3px 3px 0 0; }
.stack .lined { height: 20px; border-top: 1px solid #3d3d3d; border-radius: 0; }
.soft-i .i { color: #aaa; }
.pair { display: flex; gap: 1px; }
.pair .act { flex: 1; }
.near { margin-top: -4px; }
.far { margin-top: 11px; }
.sbar { width: 5px; margin: 6px 0 14px; background: #545454; border-radius: 3px; }
.vtabs { flex: none; width: 20px; padding: 5px 3px 0 0; display: flex; flex-direction: column; gap: 4px; }
.vtabs button { writing-mode: vertical-rl; transform: rotate(180deg); padding: 7px 0; width: 17px; border: 1px solid #3d3d3d; border-right: 0; border-radius: 4px 0 0 4px; color: #bbb; }
.vtabs .on { background: #303030; color: #fff; }

.outliner { background: #282828; overflow: hidden; }
.outliner .ehead, .properties .ehead { gap: 6px; padding-right: 5px; }
.outliner .ehead { background: #282828; }
.grow1 { flex: 11; }
.grow4 { flex: 46; }
.grow6 { flex: 59; }
.grow7 { flex: 70; }
.find { width: 110px; background: #1d1d1d; padding-left: 3px; }
.find input { flex: 1; width: 0; }
.tree { position: relative; list-style: none; flex: 1; padding-top: 2px; color: #c4c4c4; background: repeating-linear-gradient(#282828 0 20px, #2b2b2b 20px 40px) 0 2px; }
.tree li { display: flex; align-items: center; height: 20px; padding-right: 9px; }
.tree b { font-weight: normal; font-size: 9px; width: 16px; text-align: center; margin-right: 5px; color: #ccc; }
.tree span { margin-left: 7px; white-space: nowrap; }
.tree li > .i { width: 15px; color: #e0e0e0; }
.d0 { padding-left: 22px; }
.d1 { padding-left: 21px; }
.d2 { padding-left: 41px; }
.d3 { padding-left: 62px; }
.tree .box { background: #5a5a5a; border-radius: 4px; padding: 1px; outline: 1px solid #777; }
.tree .or, .tree li > .or { color: #cc844d; }
.tree .bl, .tree li > .bl { color: #6d8fe6; }
.tree .gr, .tree li > .gr { color: #00b887; }
.tree li > .rd { color: #e5564f; }
.extra { display: flex; gap: 4px; margin-left: 22px; }
.ops { display: flex; gap: 5px; margin-left: auto; align-items: center; }
.ops .i { width: 15px; color: #e8e8e8; }
.ops .dimi { color: #7a7a7a; }
.ops input { width: 10px; height: 10px; background: #e6e6e6; border-radius: 2px; margin-right: 2px; }
.ops input:checked::after { content: ""; display: block; width: 3px; height: 6px; margin: 1px 0 0 3px; border: solid #222; border-width: 0 1px 1px 0; transform: rotate(40deg); }
.active { background: #334d80; }
.tree .active span { color: #ffa028; }
.active .dimi { color: #7f96c4; }
.tree::before { content: ""; position: absolute; left: 29px; top: 86px; height: 70px; border-left: 1px solid #e5564f; }
.tree::after { content: ""; position: absolute; left: 49px; top: 106px; height: 50px; border-left: 1px dashed #666; }

.properties { background: #303030; overflow: hidden; }
.pbody { flex: 1; display: flex; min-height: 0; }
.ptabs { flex: none; width: 28px; background: #1d1d1d; padding: 8px 0 0 2px; color: #b5b5b5; }
.ptabs button { width: 26px; height: 28px; border-radius: 4px 0 0 4px; }
.ptabs .i { width: 15px; height: 15px; }
.ptabs .sep { margin-top: 8px; }
.ptabs .on { background: #303030; color: #71a8ff; }
.ptabs .pk { color: #b9525b; }
.ptabs .or { color: #cc7f45; }
.ptabs .bl { color: #5d7fd0; }
.ptabs .gr { color: #00b887; }
.ptabs .wh { color: #e0e0e0; }
.pmain { flex: 1; min-width: 0; padding: 8px 6px 0 8px; }
.path { display: flex; align-items: center; height: 20px; padding: 0 0 0 2px; }
.path span { margin: 0 12px 0 8px; }
.path span + .i { margin-right: 4px; }
.path .pinr { margin: 0 0 0 auto; }
.addmod { margin: 17px 0 10px; }
.addmod .c { margin-right: 2px; }
.modifier { border: 1px solid #4772b3; border-radius: 4px; background: #3d3d3d; padding: 2px 5px; height: 111px; }
.mrow { display: flex; align-items: center; height: 19px; gap: 4px; }
.mrow > .i { width: 14px; }
.mname { display: flex; flex: none; width: 188px; height: 19px; margin: 0 0 0 7px; border-radius: 4px; overflow: hidden; }
.mname input { flex: 1; width: 0; background: #1d1d1d; padding-left: 7px; }
.mname .dark { background: #262626; }
.mname .blue + .blue { border-left: 1px solid #3d3d3d; }
.mtree { display: flex; height: 19px; margin: 11px 3px 9px; border-radius: 4px; overflow: hidden; background: #262626; }
.mtree input { flex: 1; width: 0; background: #1d1d1d; padding-left: 7px; }
.sub { display: flex; align-items: center; height: 25px; padding-left: 12px; gap: 2px; }

.status { flex: none; height: 21px; display: flex; align-items: center; padding: 0 8px 0 9px; color: #8e8e8e; background: #1d1d1d; border-top: 1px solid #161616; }
.status span { display: flex; align-items: center; gap: 9px; width: 211px; }
.status em { margin-left: auto; font-style: normal; }
```
